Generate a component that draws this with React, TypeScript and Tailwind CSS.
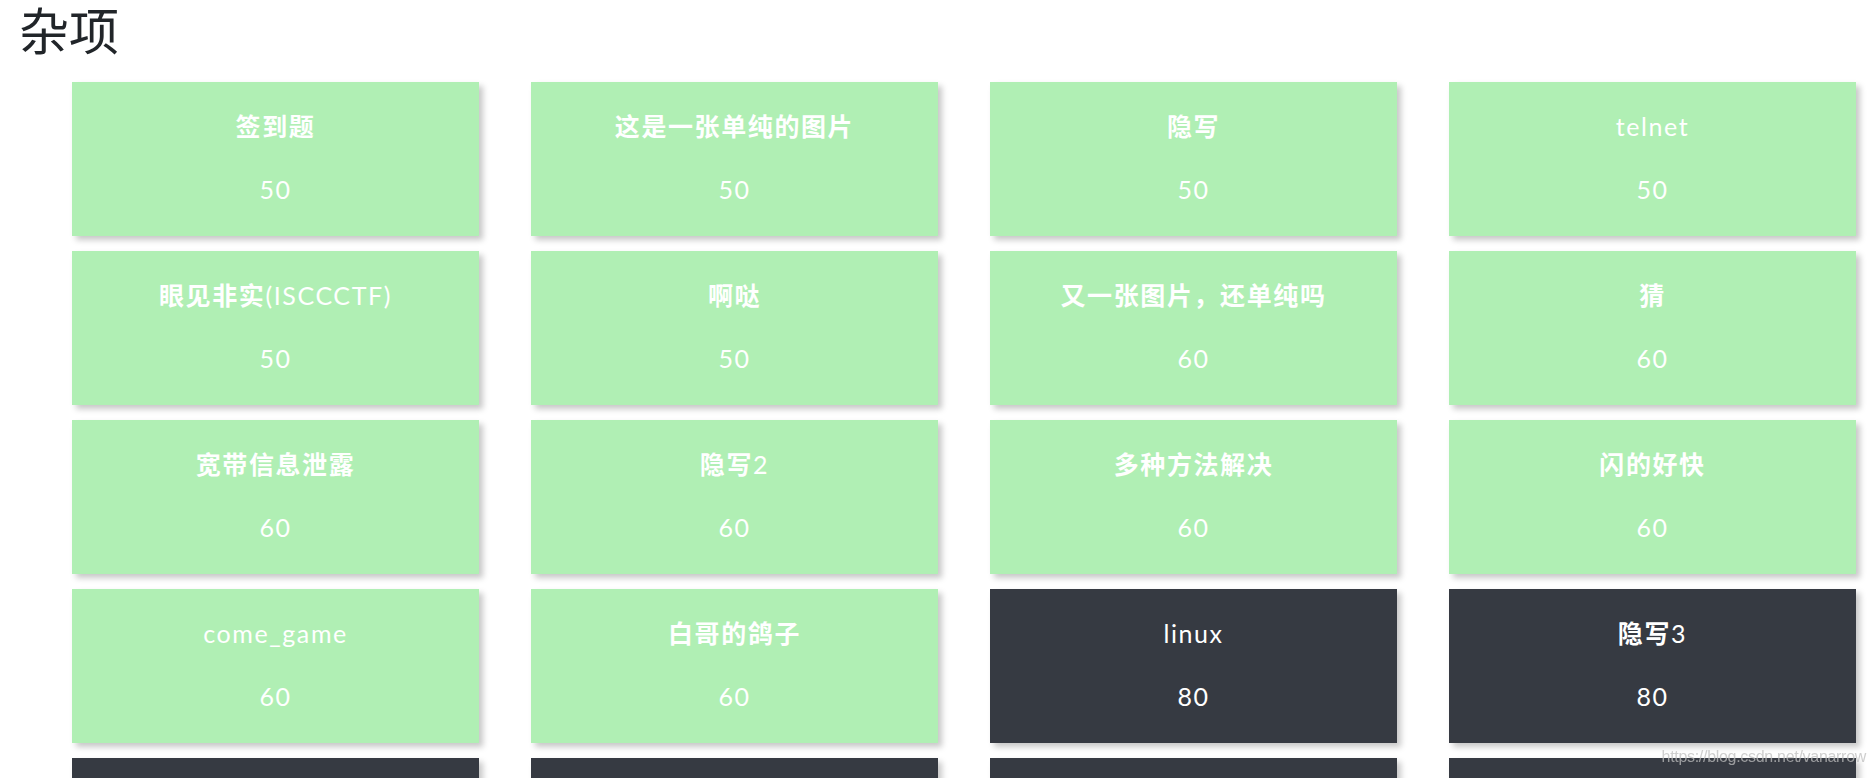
import React from 'react';

type Challenge = {
  name: string;
  score: number;
  solved: boolean;
};

const challenges: Challenge[] = [
  { name: '签到题', score: 50, solved: true },
  { name: '这是一张单纯的图片', score: 50, solved: true },
  { name: '隐写', score: 50, solved: true },
  { name: 'telnet', score: 50, solved: true },
  { name: '眼见非实(ISCCCTF)', score: 50, solved: true },
  { name: '啊哒', score: 50, solved: true },
  { name: '又一张图片，还单纯吗', score: 60, solved: true },
  { name: '猜', score: 60, solved: true },
  { name: '宽带信息泄露', score: 60, solved: true },
  { name: '隐写2', score: 60, solved: true },
  { name: '多种方法解决', score: 60, solved: true },
  { name: '闪的好快', score: 60, solved: true },
  { name: 'come_game', score: 60, solved: true },
  { name: '白哥的鸽子', score: 60, solved: true },
  { name: 'linux', score: 80, solved: false },
  { name: '隐写3', score: 80, solved: false },
  { name: '做个游戏(08067CTF)', score: 80, solved: false },
  { name: '想蹭网先解开密码', score: 80, solved: false },
  { name: 'Linux2', score: 80, solved: false },
  { name: '账号被盗了', score: 80, solved: false },
];

// CJK runs are bold, latin stays regular
const cjk = /([\u3000-\u303f\u4e00-\u9fff\uff00-\uffef]+)/;

function ChallengeName({ text }: { text: string }) {
  const parts = text.split(cjk);
  return (
    <>
      {parts.map((part, i) =>
        i % 2 === 1 ? (
          <span key={i} className="font-bold">
            {part}
          </span>
        ) : (
          <span key={i}>{part}</span>
        )
      )}
    </>
  );
}

function ChallengeCard({ challenge }: { challenge: Challenge }) {
  return (
    <div
      className={`h-[154px] flex flex-col items-center text-white text-[25px] leading-[29px] tracking-[1.6px] shadow-[4px_4px_6px_rgba(0,0,0,0.22)] ${
        challenge.solved ? 'bg-[#b0efb4]' : 'bg-[#363a42]'
      }`}
    >
      <div className="mt-[30px] whitespace-nowrap">
        <ChallengeName text={challenge.name} />
      </div>
      <div className="mt-[34px]">{challenge.score}</div>
    </div>
  );
}

export default function App() {
  return (
    <div className="min-h-screen bg-white font-['Lato','Noto_Sans_CJK_SC',sans-serif]">
      <h1 className="pl-[19px] h-[82px] text-[50px] leading-[56px] font-normal text-[#212529] font-['Noto_Sans_CJK_SC',sans-serif]">
        杂项
      </h1>
      <div className="grid grid-cols-[repeat(4,407px)] gap-x-[52px] gap-y-[15px] pl-[72px]">
        {challenges.map((c) => (
          <ChallengeCard key={c.name} challenge={c} />
        ))}
      </div>
      <div className="fixed right-[10px] bottom-[9px] text-[16px] tracking-[-0.3px] text-[rgba(190,190,190,0.75)] font-['Liberation_Sans',sans-serif]">
        https://blog.csdn.net/vanarrow
      </div>
    </div>
  );
}
